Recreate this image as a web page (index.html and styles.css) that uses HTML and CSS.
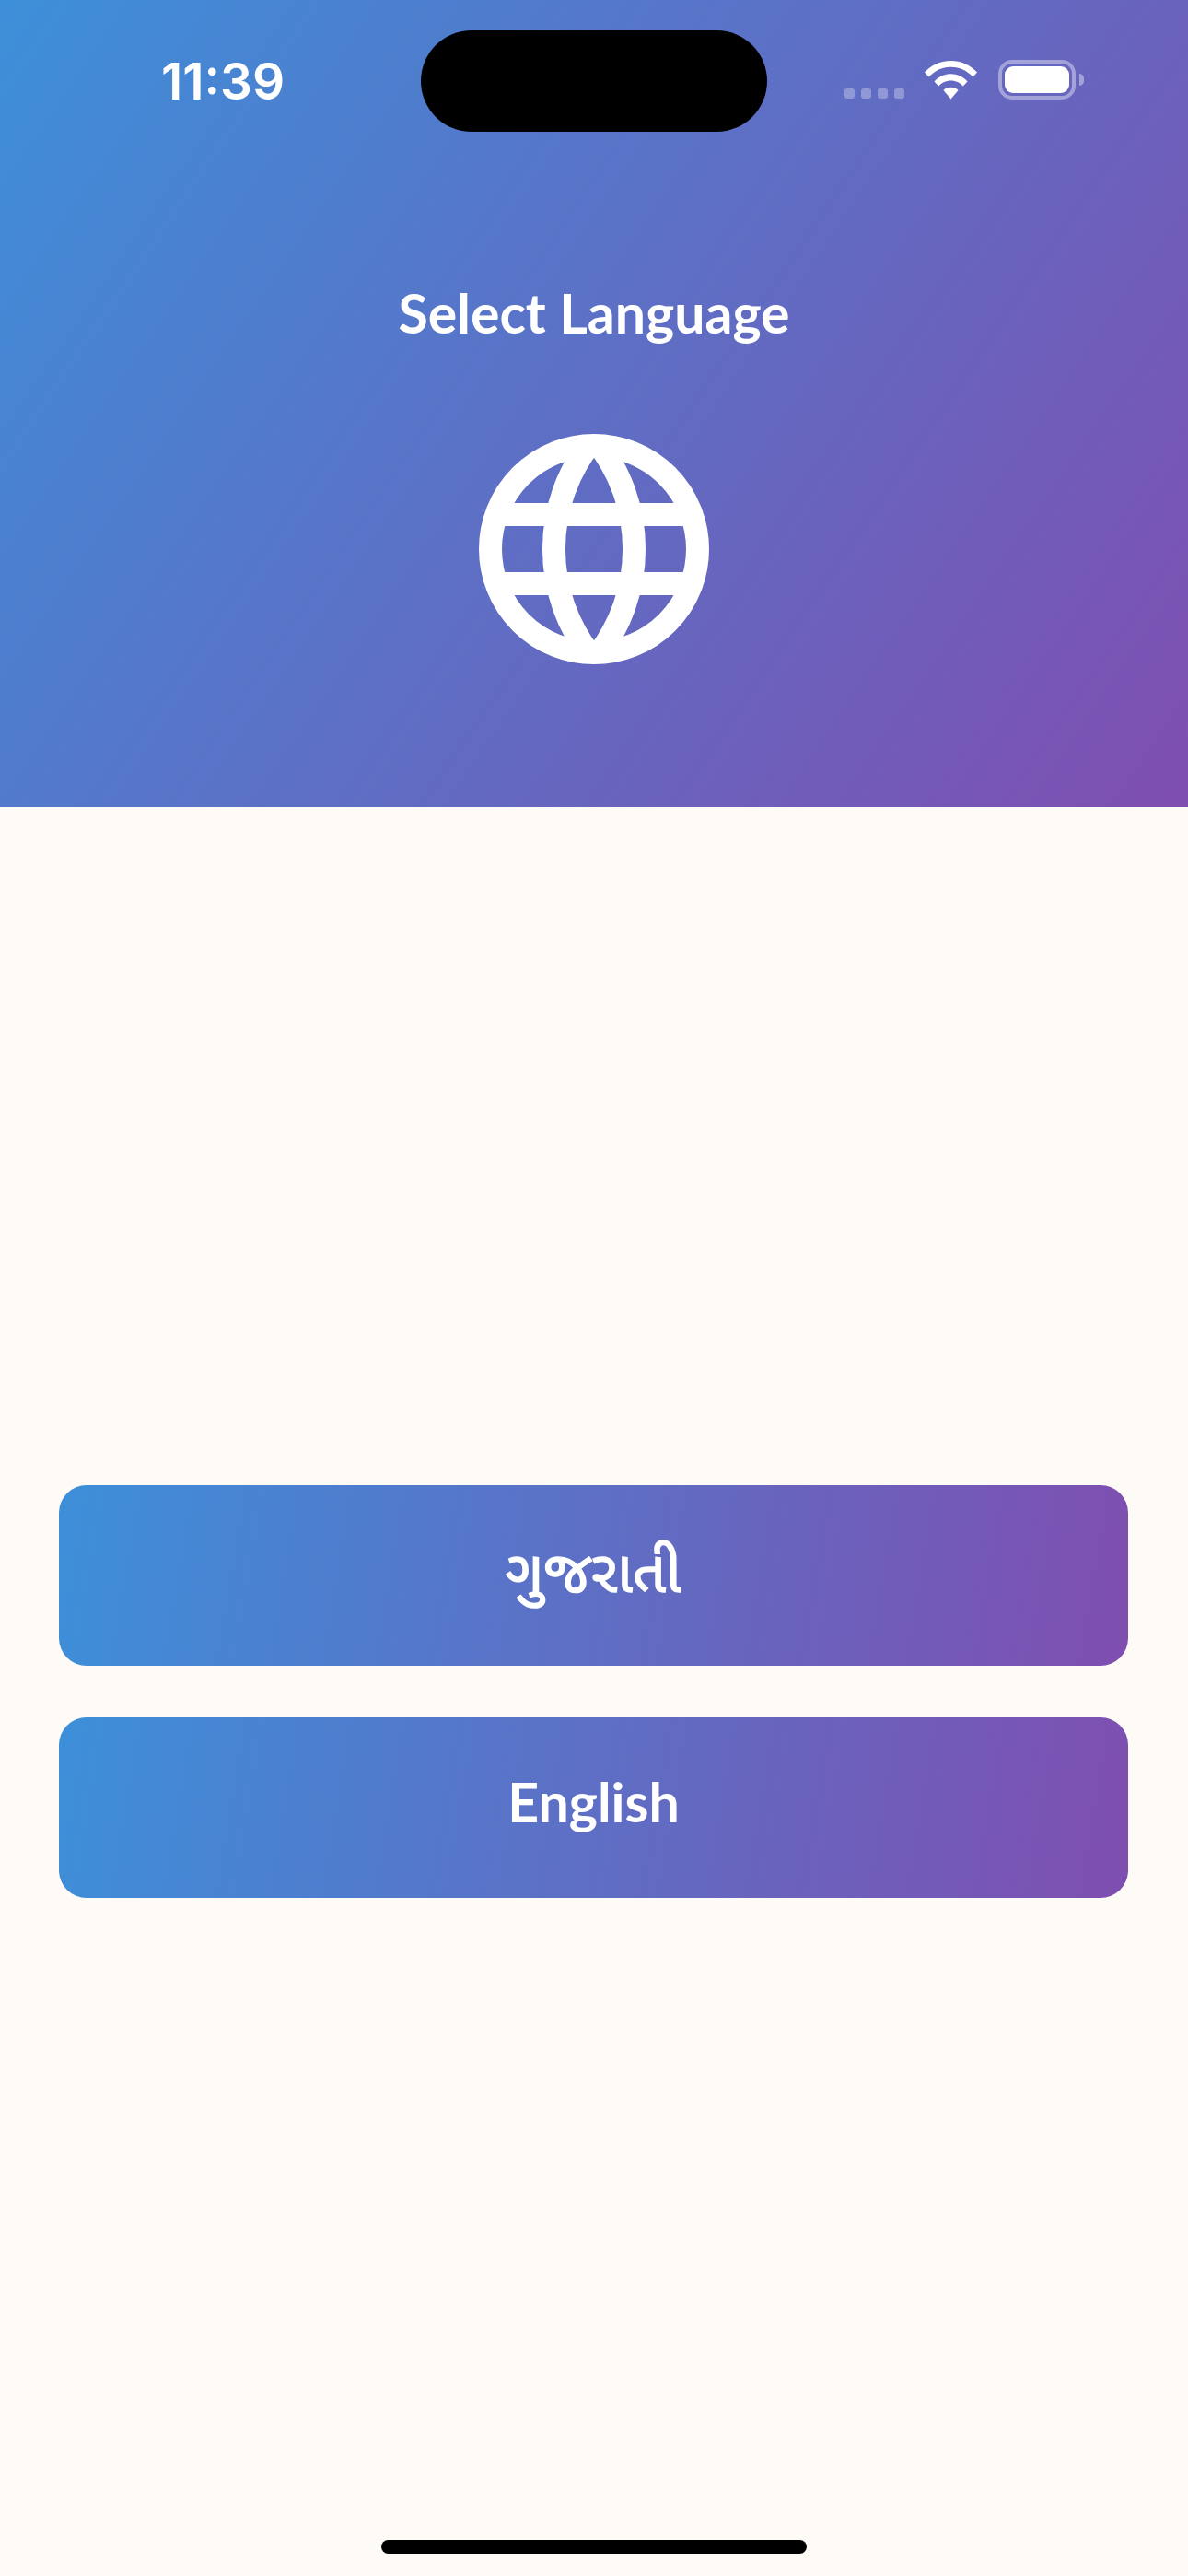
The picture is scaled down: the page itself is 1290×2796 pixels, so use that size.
FILE: index.html
```html
<!DOCTYPE html>
<html lang="en">
<head>
    <meta charset="UTF-8">
    <meta name="viewport" content="width=device-width, initial-scale=1.0">
    <title>Select Language</title>
    <link rel="stylesheet" href="styles.css">
</head>
<body>
    <!-- Header -->
    <div class="header">
        <div class="status-bar">
            <span class="status-time">11:39</span>
            <div class="island"></div>
            <div class="status-icons">
                <div class="signal-dots">
                    <span class="signal-dot"></span>
                    <span class="signal-dot"></span>
                    <span class="signal-dot"></span>
                    <span class="signal-dot"></span>
                </div>
                <svg class="wifi-icon" viewBox="0 0 57 42" width="57" height="42">
                    <path d="M0 12.5C7.5 4.5 17.5 0 28.5 0S49.500 4.500 57 12.500L52.500 17.500C46 10.500 37.800 6.700 28.500 6.700S11 10.500 4.500 17.500Z" fill="#fff"/>
                    <path d="M10.500 22.500C15 17.300 21.500 14.300 28.500 14.300S42 17.300 46.500 22.500L41.800 27.500C38.500 23.800 33.800 21.500 28.500 21.500S18.500 23.800 15.200 27.500Z" fill="#fff"/>
                    <path d="M20.500 32C22.500 30 25.300 28.800 28.500 28.800S34.500 30 36.500 32L28.500 41.500Z" fill="#fff"/>
                </svg>
                <div class="battery">
                    <div class="battery-body">
                        <div class="battery-fill"></div>
                    </div>
                    <div class="battery-nub"></div>
                </div>
            </div>
        </div>
        <h1 class="title">Select Language</h1>
        <svg class="globe" viewBox="0 0 250 250" width="250" height="250">
            <circle cx="125" cy="125" r="112.500"/>
            <path d="M15 87.500H235M15 162.500H235"/>
            <path d="M121 10A187 187 0 0 0 121 240M129 10A187 187 0 0 1 129 240"/>
        </svg>
    </div>

    <!-- Language Buttons -->
    <div class="language-list">
        <button class="language-button language-button-gu" lang="gu">ગુજરાતી</button>
        <button class="language-button language-button-en">English</button>
    </div>

    <div class="home-bar"></div>
</body>
</html>
```

FILE: styles.css
```css
* {
    margin: 0;
    padding: 0;
    box-sizing: border-box;
}

body {
    width: 1290px;
    height: 2796px;
    background-color: #fefaf5;
    font-family: Lato, "Noto Sans", "Noto Sans Gujarati", sans-serif;
    display: flex;
    flex-direction: column;
    overflow: hidden;
}

/* Header */
.header {
    height: 876px;
    background: linear-gradient(124.2deg, #3d8fd9, #7f4eb0);
    color: #ffffff;
    display: flex;
    flex-direction: column;
    align-items: center;
}

.status-bar {
    width: 100%;
    height: 143px;
    padding: 33px 113px 0 175px;
    display: flex;
    align-items: flex-start;
}

.status-time {
    width: 282px;
    font-family: Inter, sans-serif;
    font-size: 55px;
    font-weight: 600;
    line-height: 110px;
}

.island {
    width: 376px;
    height: 110px;
    background-color: #000000;
    border-radius: 55px;
}

.status-icons {
    margin-left: auto;
    margin-top: 32px;
    display: flex;
    align-items: flex-end;
}

.signal-dots {
    display: flex;
    gap: 7px;
    margin-right: 22px;
    padding-bottom: 1px;
}

.signal-dot {
    width: 11px;
    height: 11px;
    border-radius: 3px;
    background-color: rgba(255, 255, 255, 0.3);
}

.wifi-icon {
    display: block;
    margin-right: 23px;
}

.battery {
    display: flex;
    align-items: center;
}

.battery-body {
    width: 84px;
    height: 43px;
    padding: 3px;
    border: 4px solid rgba(255, 255, 255, 0.4);
    border-radius: 15px;
}

.battery-fill {
    width: 100%;
    height: 100%;
    background-color: #ffffff;
    border-radius: 9px;
}

.battery-nub {
    width: 5px;
    height: 13px;
    margin-left: 4px;
    background-color: rgba(255, 255, 255, 0.4);
    border-radius: 0 6px 6px 0;
}

.title {
    margin-top: 162px;
    font-size: 59px;
    font-weight: 700;
    line-height: 70px;
    text-align: center;
}

.globe {
    display: block;
    margin-top: 96px;
    fill: none;
    stroke: #ffffff;
    stroke-width: 25;
}

/* Language Buttons */
.language-list {
    flex-grow: 1;
    padding: 736px 65px 0 64px;
    display: flex;
    flex-direction: column;
    gap: 56px;
}

.language-button {
    height: 196px;
    border: none;
    border-radius: 30px;
    background: linear-gradient(99.6deg, #3d8fd9, #7f4eb0);
    color: #ffffff;
    font-family: inherit;
}

.language-button-gu {
    font-size: 63px;
    font-weight: 400;
    -webkit-text-stroke: 1.5px #ffffff;
}

.language-button-en {
    padding-bottom: 14px;
    font-size: 59px;
    font-weight: 700;
}

/* Home Indicator */
.home-bar {
    width: 462px;
    height: 15px;
    margin: 0 auto 24px;
    background-color: #000000;
    border-radius: 8px;
}
```
